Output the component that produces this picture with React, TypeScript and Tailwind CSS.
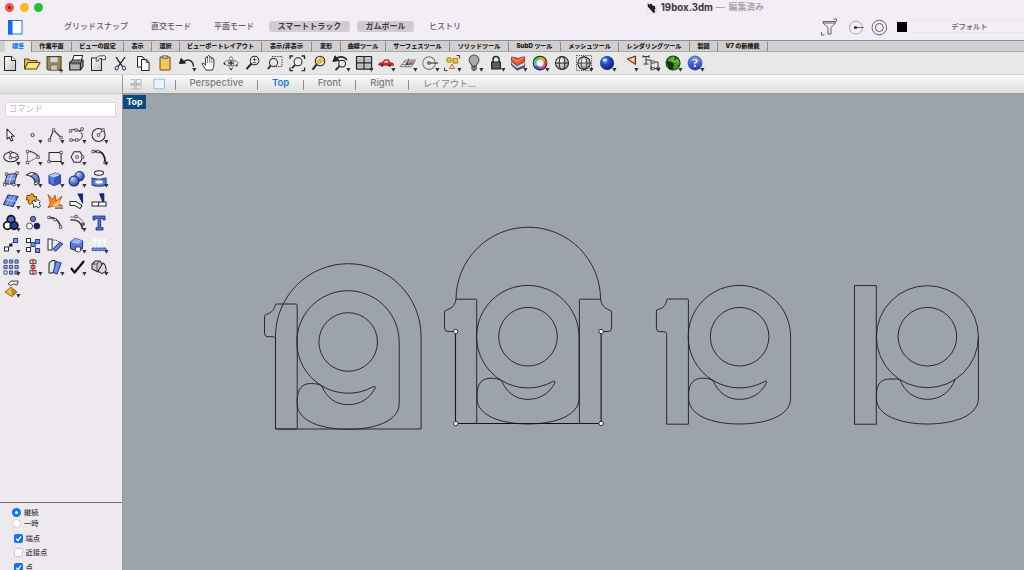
import React from "react";

type Kids = { children?: React.ReactNode };

const INK = "#262626";
const BLUE = "#4a6fd8";

const Drop = () => <path d="M16.200 16h4.200l-2.100 3.600z" fill="#333" stroke="none" />;

const Node = ({ x, y, f = "#fff" }: { x: number; y: number; f?: string }) => (
  <rect x={x - 1.2} y={y - 1.2} width={2.4} height={2.4} fill={f} stroke="#333" strokeWidth={0.75} />
);

const Cell = ({ children, drop = true }: Kids & { drop?: boolean }) => (
  <svg
    viewBox="0 0 22 22"
    className="block h-[22.1px] w-[22.1px] shrink-0 overflow-visible"
    fill="none"
    stroke={INK}
    strokeWidth={1}
    strokeLinejoin="round"
  >
    {children}
    {drop && <Drop />}
  </svg>
);

const Gradients = () => (
  <svg className="absolute h-0 w-0">
    <defs>
      <linearGradient id="paper" x1="0" y1="0" x2="1" y2="1">
        <stop offset="0" stopColor="#fff" />
        <stop offset="1" stopColor="#bdbdbd" />
      </linearGradient>
      <radialGradient id="ballBlue" cx=".35" cy=".3" r=".8">
        <stop offset="0" stopColor="#9fc2ff" />
        <stop offset=".35" stopColor="#2450d8" />
        <stop offset="1" stopColor="#06124f" />
      </radialGradient>
      <radialGradient id="ballSoft" cx=".35" cy=".3" r=".8">
        <stop offset="0" stopColor="#c4d4ff" />
        <stop offset=".5" stopColor="#5b7fd8" />
        <stop offset="1" stopColor="#233c92" />
      </radialGradient>
      <radialGradient id="ballGrey" cx=".35" cy=".3" r=".8">
        <stop offset="0" stopColor="#fff" />
        <stop offset="1" stopColor="#8d8d8d" />
      </radialGradient>
      <radialGradient id="ballGreen" cx=".6" cy=".4" r=".7">
        <stop offset="0" stopColor="#8fe04a" />
        <stop offset="1" stopColor="#126b13" />
      </radialGradient>
      <linearGradient id="help" x1="0" y1="0" x2="0" y2="1">
        <stop offset="0" stopColor="#7d9af0" />
        <stop offset="1" stopColor="#1934b4" />
      </linearGradient>
      <linearGradient id="blueFace" x1="0" y1="0" x2="1" y2="1">
        <stop offset="0" stopColor="#a9bffa" />
        <stop offset="1" stopColor="#3c60cf" />
      </linearGradient>
    </defs>
  </svg>
);

const mainTools: React.ReactNode[] = [
  <Cell drop={false}>
    <path d="M5.5 4.5h7l4 4v10h-11z" fill="url(#paper)" />
    <path d="M12.5 4.5v4h4" fill="#fff" />
  </Cell>,
  <Cell drop={false}>
    <path d="M3.500 17V7h4l1.500 1.500h7V11" fill="#e9b93a" stroke="#5b4310" />
    <path d="M3.500 17l3.500-6.500h12L15.500 17z" fill="#ffe27a" stroke="#5b4310" />
  </Cell>,
  <Cell drop={false}>
    <path d="M4 4.500h14v13.500H5.500L4 16.500z" fill="#96904c" stroke="#45431f" />
    <rect x="7" y="5" width="8" height="5.500" fill="#d7d7d7" stroke="#666" strokeWidth=".5" />
    <rect x="7.500" y="13" width="7" height="5" fill="#c7c7c7" stroke="#444" strokeWidth=".5" />
    <path d="M16 18.500h4M18 16.500v4" />
  </Cell>,
  <Cell drop={false}>
    <path d="M7 9l2-5.500h8.500L16 9" fill="#fff" />
    <path d="M4.500 10.500l3-2.500h10.500v6.500l-2.500 3.500H4.500z" fill="#8f8f8f" />
    <path d="M4.500 11h11v7M15.500 11l2.500-3" stroke="#222" />
    <path d="M6 14h8M6 16h8" stroke="#eee" strokeWidth=".8" />
  </Cell>,
  <Cell drop={false}>
    <path d="M4.500 6h10v12.500h-10z" fill="url(#paper)" />
    <path d="M9 9c0-4 3-6 6-5l2-.5 1.500 1v3h-3l-1-1c-2 0-3 .5-3.500 2.500z" fill="#eee" strokeWidth=".8" />
  </Cell>,
  <Cell drop={false}>
    <path d="M7 5l6.500 9.500M16 5L9 14.500" stroke="#1f2937" strokeWidth="1.300" />
    <ellipse cx="7.800" cy="16" rx="1.500" ry="2" stroke="#2e3e66" transform="rotate(30 7.800 16)" />
    <ellipse cx="14.800" cy="16" rx="1.500" ry="2" stroke="#2e3e66" transform="rotate(-30 14.800 16)" />
  </Cell>,
  <Cell drop={false}>
    <path d="M5.500 4.500h4.500l2.500 2.500v8h-7z" fill="#fff" />
    <path d="M9.500 7.500h4.500l3 3v8H9.500z" fill="#fff" />
    <path d="M14 7.500v3h3" strokeWidth=".7" />
  </Cell>,
  <Cell drop={false}>
    <rect x="6" y="5" width="10" height="13" rx=".8" fill="#f4cb5a" stroke="#6a4c0d" />
    <rect x="8.500" y="3.800" width="5" height="2.500" fill="#c9c9c9" stroke="#444" strokeWidth=".7" />
  </Cell>,
  <Cell>
    <path d="M7 10.500c4-4.500 10-2.500 10.500 4" strokeWidth="1.500" />
    <path d="M3.500 11.500l1.500-5 4.500 4.500z" fill="#222" />
  </Cell>,
  <Cell drop={false}>
    <path d="M8 18c-.5-2-3.500-4-4-6.500 1-1 2.500.5 3.500 1.500V6c.5-1.300 1.700-1.200 2 0V4.500c.5-1.300 1.900-1.200 2.200 0v1c.5-1 1.800-.9 2.100.2V7c.5-.9 1.800-.8 2 .3V13c0 2.500-1 3-1.300 5z" fill="#fff" strokeWidth=".9" />
    <path d="M9.500 6v5M11.700 5v6M13.800 7v4" strokeWidth=".6" />
  </Cell>,
  <Cell drop={false}>
    <ellipse cx="11" cy="11" rx="7" ry="2.800" stroke="#777" strokeWidth=".9" />
    <ellipse cx="11" cy="11" rx="2.300" ry="6.500" stroke="#777" strokeWidth=".9" />
    <path d="M11 8.500v5M8.500 11h5" stroke="#111" strokeWidth="1.100" />
    <path d="M3 12l2-2 .5 3zM9.500 16.500l1.500 2 1.500-2zM15.500 13.500l2.500-1-1 2.500z" fill="#333" stroke="none" />
  </Cell>,
  <Cell drop={false}>
    <circle cx="12.500" cy="8.500" r="4.300" fill="#eee" />
    <path d="M9.500 11.500L4.500 17" strokeWidth="2" />
    <path d="M10.700 7.500h3.600M12.500 5.800v3.500M10.700 10.600h3.600" strokeWidth=".8" />
  </Cell>,
  <Cell drop={false}>
    <rect x="8" y="4.500" width="10" height="10" strokeDasharray="1.500 1" strokeWidth=".8" />
    <circle cx="9.500" cy="10.500" r="4" fill="#eee" />
    <path d="M6.500 13.500L4 17" strokeWidth="1.800" />
  </Cell>,
  <Cell drop={false}>
    <path d="M4 7V4h3M15.500 4h3v3M4 15.500v3h3M15.500 18.500h3v-3" strokeWidth="1.300" />
    <circle cx="12" cy="9.800" r="4" fill="#eee" />
    <path d="M9 12.800L6 16" strokeWidth="1.800" />
  </Cell>,
  <Cell drop={false}>
    <circle cx="12" cy="9" r="4.800" fill="#eee" />
    <path d="M8.500 12.500L4.500 17.500" strokeWidth="2" />
    <circle cx="10.800" cy="10" r="2" fill="#ffd92e" stroke="#a57b08" strokeWidth=".6" />
    <rect x="11.800" y="5.800" width="3.500" height="3.500" fill="#ffd92e" stroke="#a57b08" strokeWidth=".6" />
  </Cell>,
  <Cell>
    <path d="M6 7c3-3 8-3 11 1" strokeWidth="1.600" />
    <path d="M3 9.500l2-5.500 4 4.500z" fill="#222" />
    <circle cx="12" cy="11.500" r="3.400" fill="#eee" />
    <path d="M9.500 14L5.500 18" strokeWidth="1.800" />
  </Cell>,
  <Cell>
    <rect x="3.500" y="4.500" width="15" height="12.500" fill="#c3c5ca" strokeWidth="1.200" />
    <path d="M11 4.500V17M3.500 10.800h15" strokeWidth="1.200" />
    <path d="M5 8.500h4M12.500 8h4M5 14h4M12.500 14h4" stroke="#9da0a6" strokeWidth=".8" />
  </Cell>,
  <Cell>
    <path d="M3.500 13l1-2 3-.5 2-2.700h4l1.500 2.700 3 .8.500 2.200z" fill="#e32218" stroke="#a4130d" strokeWidth=".7" />
    <path d="M8.800 10.500l1.300-1.800h2.500l1 1.800z" fill="#e8efff" stroke="none" />
    <circle cx="7" cy="13.500" r="1.300" fill="#333" stroke="none" />
    <circle cx="14.500" cy="13.500" r="1.300" fill="#333" stroke="none" />
  </Cell>,
  <Cell>
    <path d="M3 14.500l5.500-6.500h10L14 15zM5 12.500h11M7 10h10.500M8 14.500l4-6.500M11 14.700L15.500 8" stroke="#555" strokeWidth=".7" />
    <path d="M10 12l7-1" stroke="#d33" />
    <path d="M10 12l2-5.500" stroke="#2b9b35" />
    <circle cx="10" cy="12" r="1.200" fill="#444" stroke="none" />
  </Cell>,
  <Cell>
    <circle cx="10" cy="11" r="6.300" stroke="#777" />
    <circle cx="10" cy="11" r="1.300" fill="#fff" />
    <path d="M11.300 11H19" />
  </Cell>,
  <Cell>
    <path d="M15.500 3.500h3v3M3.500 15.500v3h3" strokeWidth=".9" />
    <circle cx="8" cy="8" r="2.400" fill="#ffc42d" stroke="#9c6200" strokeWidth=".8" />
    <rect x="12" y="6.500" width="4.500" height="4.500" fill="#ffc42d" stroke="#9c6200" strokeWidth=".8" />
    <path d="M8.500 16.500l2.500-4.500 2.500 4.500z" fill="#ffe59b" stroke="#9c6200" strokeWidth=".8" />
  </Cell>,
  <Cell>
    <path d="M8.800 14c0-2.500-2.800-3-2.800-6a5 5 0 0 1 10 0c0 3-2.800 3.500-2.800 6z" fill="#a9a9a9" stroke="#4b4b4b" />
    <path d="M8.800 14.500h4.400v2.500l-1.200 1.500h-2l-1.200-1.500z" fill="#777" stroke="#444" strokeWidth=".8" />
  </Cell>,
  <Cell>
    <path d="M8 10V7.500a3 3 0 0 1 6 0V10" strokeWidth="1.500" />
    <rect x="6.500" y="10" width="9" height="7" fill="#4d4d4d" />
    <path d="M8 12h6M8 14.500h6" stroke="#888" strokeWidth=".7" />
  </Cell>,
  <Cell>
    <path d="M4.500 13l5.500 5 7.500-3v-3l-7.500 3.500-5.500-5z" fill="#3762cc" stroke="#142a70" strokeWidth=".8" />
    <path d="M4.500 10l5.500 4.500 7.500-4v2.500l-7.500 3.300-5.500-4.500z" fill="#fff" stroke="#555" strokeWidth=".5" />
    <path d="M4.500 5l7 1.500L17.500 4.500v5L10 13.500 4.500 9z" fill="#ef5634" stroke="#7d2412" strokeWidth=".8" />
    <path d="M4.500 5.500l5.500 4 7.500-5" stroke="#ffb08c" strokeWidth=".8" />
  </Cell>,
  <Cell>
    <g stroke="none">
      <path d="M11 11V3.800a7.200 7.200 0 0 1 6.200 3.600z" fill="#f7a42c" />
      <path d="M11 11l6.200-3.600v7.200z" fill="#ff3b34" />
      <path d="M11 11l6.200 3.600a7.200 7.200 0 0 1-6.200 3.600z" fill="#e333d3" />
      <path d="M11 11v7.200a7.200 7.200 0 0 1-6.200-3.600z" fill="#4a59f4" />
      <path d="M11 11l-6.200 3.600V7.400z" fill="#26c8dd" />
      <path d="M11 11L4.800 7.400A7.200 7.200 0 0 1 11 3.800z" fill="#50cf3b" />
    </g>
    <circle cx="11" cy="11" r="6.800" />
    <circle cx="11" cy="11" r="3.800" fill="#f3f3f3" stroke="#999" strokeWidth=".6" />
  </Cell>,
  <Cell drop={false}>
    <circle cx="11" cy="11" r="6.500" fill="url(#ballGrey)" />
    <ellipse cx="11" cy="11" rx="2.800" ry="6.500" />
    <path d="M4.500 11h13" />
  </Cell>,
  <Cell>
    <rect x="3.500" y="3.500" width="15" height="15" strokeDasharray="1 1.200" strokeWidth=".9" />
    <circle cx="11" cy="11" r="6.300" fill="url(#ballGrey)" />
    <ellipse cx="11" cy="11" rx="2.800" ry="6.300" strokeWidth=".8" />
    <path d="M4.700 11h12.600" strokeWidth=".8" />
  </Cell>,
  <Cell>
    <circle cx="11" cy="11" r="6.700" fill="url(#ballBlue)" stroke="#0a1a60" strokeWidth=".5" />
    <ellipse cx="8.800" cy="8" rx="1.800" ry="1.300" fill="#e7f0ff" stroke="none" />
  </Cell>,
  <Cell>
    <path d="M9 7l8.500-3v8.500z" fill="#ff9d2e" strokeWidth=".9" />
    <path d="M12 7.300l4-1.500v4z" fill="#ffdfad" stroke="none" />
  </Cell>,
  <Cell>
    <path d="M3 4.500h6M6 4.500v7.500M3.500 12h5M6 8h5v8.500h7M13 10h5v7" strokeWidth=".9" />
    <path d="M3 3v3M9 3v3M11 14.500v4" strokeWidth=".8" />
    <Node x={13} y={10} />
    <Node x={13} y={16.5} />
    <Node x={18} y={16.5} />
  </Cell>,
  <Cell>
    <circle cx="11" cy="11" r="7" fill="url(#ballGreen)" stroke="#0f3d0f" />
    <path d="M4.500 10c2-1 3 1 5 0l2 3-1.500 4-3-.5M12 8l2-3" fill="#152c0c" stroke="#12300f" strokeWidth="1.100" />
    <path d="M10 11l6-5M11 13l6 .5M10.500 12l5-1.500" stroke="#12400f" strokeWidth=".7" />
  </Cell>,
  <Cell>
    <circle cx="11" cy="11" r="7" fill="url(#help)" stroke="#1b2e8c" strokeWidth=".6" />
    <text x="11" y="15.300" textAnchor="middle" fontSize="12.500" fontWeight="700" fontFamily="Liberation Serif, serif" fill="#fff" stroke="none">?</text>
  </Cell>,
];

const gridStops = [5.5, 11, 16.5];

const sideTools: React.ReactNode[] = [
  <Cell drop={false}><path d="M7 5v10l2.300-2 1.700 4 1.800-.8-1.700-3.900h3z" fill="#fff" /></Cell>,
  <Cell><circle cx="10.500" cy="11" r="1.600" fill="#fff" strokeWidth=".9" /></Cell>,
  <Cell><path d="M5.500 16l4-10 8 8" /><Node x={5.5} y={16} /><Node x={9.5} y={6} /><Node x={17} y={13.5} /></Cell>,
  <Cell><path d="M10 6c-3-1.500-5 0-5.500 1M10 6c3 1.500 5 1 6-.5M12.500 6.500c5 2 5 8 .5 9.500H5" strokeWidth=".9" /><Node x={4.5} y={7} /><Node x={10} y={6} /><Node x={16} y={5} /><Node x={5} y={16} /><Node x={10.5} y={16} /></Cell>,
  <Cell><circle cx="10.500" cy="11" r="6.500" /><path d="M10.500 11l4-4.500" strokeWidth=".8" /><Node x={10.5} y={11} /><Node x={15} y={6} /></Cell>,

  <Cell><ellipse cx="11" cy="11" rx="7.300" ry="4.800" /><path d="M10.500 11.500V6M10.500 11.500h6" strokeWidth=".7" /><Node x={10.5} y={6.5} /><Node x={10.5} y={11.5} /><Node x={17} y={11.5} /></Cell>,
  <Cell><path d="M5.500 5.500c5 0 9 2 10.500 5.500" /><path d="M5.500 5.500v11l10.500-5.500" strokeWidth=".8" strokeDasharray="1.500 .7" /><Node x={5.5} y={5.5} /><Node x={5.5} y={16.5} /><Node x={16} y={11} /></Cell>,
  <Cell><rect x="5" y="6.500" width="12" height="9" /><Node x={5} y={15.5} /><Node x={17} y={6.5} /></Cell>,
  <Cell><path d="M5 11l3-5.200h6L17 11l-3 5.200H8z" /><Node x={11} y={11} /><Node x={16.5} y={11} /></Cell>,
  <Cell><path d="M5 5.500h4c5 0 8 4 8 10v2" strokeWidth="2" /><Node x={5} y={5.5} /><Node x={10} y={5.5} /><Node x={17} y={16.5} /></Cell>,

  <Cell><path d="M7 6.500l10-1-3 10.500H4.500z" fill="url(#blueFace)" /><path d="M12 6l-3 10M5.500 11h10" stroke="#dfe8ff" strokeWidth=".7" /><Node x={6.5} y={6} /><Node x={17} y={5} /><Node x={4.5} y={16.5} /><Node x={14} y={16.5} /></Cell>,
  <Cell><path d="M4.500 7l4.500-2.500c6 0 9 4 8 10.500l-4 2c1-5.500-3-9.500-8.500-10z" fill="url(#blueFace)" /><path d="M4.500 7l4.500-2.500 4 1L9 8z" fill="#fff" strokeWidth=".7" /><path d="M12 15l4-1.500.5 1.500-3.500 2z" fill="#fff" strokeWidth=".7" /></Cell>,
  <Cell><path d="M5 7.500L11.500 5l5 2v8L10 17.500l-5-2.500z" fill="#5a7ade" stroke="#1f347f" /><path d="M5 7.500L11.500 5l5 2L10 9.500z" fill="#b9caff" stroke="none" /><path d="M10 9.500v8l6.500-2.500V7z" fill="#3857bd" stroke="none" /></Cell>,
  <Cell><circle cx="13.500" cy="8" r="4.600" fill="url(#ballSoft)" stroke="#142764" /><circle cx="8" cy="13" r="5" fill="url(#ballSoft)" stroke="#142764" /></Cell>,
  <Cell><ellipse cx="11" cy="5" rx="4.500" ry="2.200" fill="#fff" /><path d="M4 10c3 1.500 11 1.500 14 0v7c-3 1.500-11 1.500-14 0z" fill="#5678e2" stroke="#23408f" /><ellipse cx="11" cy="14" rx="4" ry="2" fill="#fff" stroke="#8aa0e8" /></Cell>,

  <Cell><path d="M8 5l10 1.500-5 10-9.500-2z" fill="#6484df" stroke="#1f347f" /><path d="M11.500 5.500l-5 9.500M14.500 6l-5 10M6 9.500l10.500 2" stroke="#d5deff" strokeWidth=".7" /></Cell>,
  <Cell drop={false}><path d="M5 5.500h3l1.500-2 2 1v2h3v3l-2 1 .5 3-3-1-2 2-2-2 1-2.500H4.500z" fill="#f0a127" stroke="#5c3607" strokeWidth=".9" /><path d="M11 10.500l3 1 2-2 2 2-1 2 1.500 2.500-2.500 2-1.500-2-3 1.500v-3l-1.500-2z" fill="#fff" strokeWidth=".9" /></Cell>,
  <Cell drop={false}><path d="M4 4.500l4.500 5L11 5l1 6 6-5-3.500 7.500 4 2.500H9l-5 1.500L6.500 13z" fill="#f18a27" stroke="#c23c08" strokeWidth=".8" /><path d="M8 16l8-7-2 7z" fill="#ffcb4e" stroke="none" /><path d="M11 18h8" /></Cell>,
  <Cell drop={false}><path d="M12 4h4.500v9z" fill="#152b79" stroke="#152b79" /><path d="M4 11.500h6l6 4-2 3-5-3H4z" fill="#fff" /></Cell>,
  <Cell drop={false}><path d="M12 4h3.500v9z" fill="#152b79" stroke="#152b79" strokeWidth="1.500" /><path d="M4 12h7l-1 4H4zM11 12h7v4h-8z" fill="#fff" /></Cell>,

  <Cell><circle cx="11" cy="7.500" r="3.800" fill={BLUE} stroke="#111" strokeWidth="1.700" /><circle cx="7.500" cy="13.500" r="3.800" fill="#fff" stroke="#111" strokeWidth="1.700" /><circle cx="14" cy="13.500" r="3.800" fill="#243a98" stroke="#111" strokeWidth="1.700" /></Cell>,
  <Cell drop={false}><circle cx="11" cy="7" r="2.700" fill="#5679e3" strokeWidth=".8" /><circle cx="7.500" cy="14" r="3" fill="#fff" strokeWidth=".8" /><circle cx="14.800" cy="14" r="3" fill="#142163" strokeWidth=".8" /></Cell>,
  <Cell drop={false}><path d="M5.500 5.500c6 0 11 4 11 11" strokeWidth="1.400" /><Node x={5} y={5.5} /><Node x={11} y={7.5} /><Node x={16.5} y={15} /></Cell>,
  <Cell><path d="M4.500 8c7-1 11 3 12 9" strokeWidth="1.400" /><path d="M4 5h8l5 4M16 12v5" strokeWidth=".6" /><Node x={10} y={4.5} /><Node x={17} y={12} f="#888" /></Cell>,
  <Cell drop={false}><path d="M5 4h12v4h-2V6.500h-2.300v9H15V18H8v-2.500h2v-9H7V8H5z" fill="#4d70d5" stroke="#1b3279" strokeWidth=".8" /></Cell>,

  <Cell><path d="M7 14l7-6" strokeDasharray="1.500 1" /><rect x="4.500" y="13" width="4" height="4" fill="#fff" /><rect x="13.500" y="4.500" width="4" height="4" fill="#7a99f1" stroke="#23408f" /><Node x={10.8} y={11} f="#222" /></Cell>,
  <Cell drop={false}><path d="M7 7l8 8M7 15l8-8" strokeWidth=".6" /><rect x="4.500" y="4.500" width="4" height="4" fill="#fff" /><rect x="13.500" y="5.500" width="4" height="4" fill="#6f91f0" stroke="#23408f" /><rect x="9" y="8.500" width="4" height="4" fill="#6f91f0" stroke="#23408f" /><rect x="4.500" y="13.500" width="4" height="4" fill="#fff" /><rect x="13.500" y="14.500" width="4" height="4" fill="#6f91f0" stroke="#23408f" /></Cell>,
  <Cell drop={false}><path d="M4 5h4v11H4z" fill="#fff" /><path d="M9 6c4 0 5 1 7 3" strokeDasharray="1.500 1" strokeWidth=".8" /><path d="M9 15l7-7 2.500 2-7 7z" fill="#7190e8" stroke="#23408f" /></Cell>,
  <Cell><path d="M4.500 8l5-3.500 7 2.500v7.500l-4.500 3-7.500-3z" fill="#5b7be0" stroke="#1f347f" /><path d="M4.500 8l5-3.500 7 2.500-4.500 3z" fill="#a3b8fa" stroke="none" /><path d="M9.500 13h5v4l-2 1-3-1z" fill="#fff" strokeWidth=".8" /></Cell>,
  <Cell><path d="M6.500 12V5m-1.800 2l1.800-2 1.800 2M11.500 12V5m-1.800 2l1.800-2 1.800 2M16.500 12V5m-1.800 2l1.800-2 1.800 2" stroke="#fff" strokeWidth="1.100" /><path d="M4 14h14v2.500H4z" fill="#7190e8" stroke="#23408f" strokeWidth=".8" strokeDasharray="3 .6" /></Cell>,

  <Cell>
    {gridStops.map((x) =>
      gridStops.map((y) => (
        <rect key={x * 100 + y} x={x - 1.6} y={y - 1.6} width={3.2} height={3.2} fill={x === 5.5 && y === 16.5 ? "#fff" : "#91a8ee"} stroke="#2c437f" strokeWidth=".9" />
      )),
    )}
  </Cell>,
  <Cell><rect x="8" y="4" width="6" height="3.500" fill="#ddd" strokeWidth=".8" /><rect x="9" y="9.500" width="4" height="3" fill="#ddd" strokeWidth=".8" /><rect x="8" y="14.500" width="6" height="3.500" fill="#ddd" strokeWidth=".8" /><path d="M11 3v16" stroke="#e0221b" strokeWidth="1.200" /></Cell>,
  <Cell><path d="M5 7l3-2.500h3v11L8 17H5z" fill="#e6e6e6" /><path d="M12 5.500l5 1.500-4 11-4-1.500z" fill="#7190e8" stroke="#23408f" /></Cell>,
  <Cell><path d="M5 12l3.500 4.500L18 5" stroke="#111" strokeWidth="2.200" /></Cell>,
  <Cell><path d="M4 8l3-3h5l2 3v6l-4 2-6-3z" fill="#c7c7c7" /><path d="M10 15l5-8c2 1 3 5 3 8l-4 2.500z" fill="#ddd" /><path d="M4 8h5l3-3M9 8v7" strokeWidth=".7" /></Cell>,

  <Cell><path d="M5 14l6-5 6 5-5 4.500z" fill="#efbd48" stroke="#66450d" strokeWidth=".8" /><path d="M11 9l1 9.500L17 14z" fill="#b98524" stroke="none" /><path d="M8 6l3-3h7l-1 4-4-1-2 1.500z" fill="#e9e9e9" strokeWidth=".8" /></Cell>,
];

const tabs: [string, string][] = [
  ["標準", "w-[27px]"],
  ["作業平面", "w-[40px]"],
  ["ビューの設定", "w-[52px]"],
  ["表示", "w-[28px]"],
  ["選択", "w-[28px]"],
  ["ビューポートレイアウト", "w-[82px]"],
  ["表示/非表示", "w-[50px]"],
  ["変形", "w-[29px]"],
  ["曲線ツール", "w-[45px]"],
  ["サーフェスツール", "w-[64px]"],
  ["ソリッドツール", "w-[59px]"],
  ["SubD ツール", "w-[52px]"],
  ["メッシュツール", "w-[58px]"],
  ["レンダリングツール", "w-[71px]"],
  ["製図", "w-[28px]"],
  ["V7 の新機能", "w-[50px]"],
];

const TitleBar = () => (
  <div className="flex h-[15px] items-center">
    <div className="flex gap-[5.6px] pl-[5px]">
      <span className="flex h-[9px] w-[9px] items-center justify-center rounded-full bg-[#f9514b]">
        <span className="h-[3px] w-[3px] rounded-full bg-[#7d0d0a]" />
      </span>
      <span className="h-[9px] w-[9px] rounded-full bg-[#fcb429]" />
      <span className="h-[9px] w-[9px] rounded-full bg-[#24c138]" />
    </div>
    <div className="ml-[604px] flex items-center">
      <svg viewBox="0 0 10 12" className="h-[12px] w-[10px]">
        <path d="M1 0h6l2.500 2.500V11H1z" fill="#fff" stroke="#bbb" strokeWidth=".4" />
        <path d="M.5 1.500l2 1 2-1 1 2 2.500.5.500 3-1 1 1 2-2 1-2-2-1.500-2L1 5z" fill="#222" />
      </svg>
      <span className="ml-[3.5px] w-[52px] whitespace-nowrap text-[9.7px] font-bold text-[#3a373b]">19box.3dm</span>
      <span className="ml-[3px] whitespace-nowrap text-[8.8px] font-bold text-[#aaa5ac]">
        — <span className="ml-[2px]">編集済み</span>
      </span>
    </div>
  </div>
);

const ModeBar = () => (
  <div className="flex h-[25px] items-center whitespace-nowrap text-[8px] font-medium text-[#605c62]">
    <svg viewBox="0 0 15 15" className="ml-[8px] h-[15px] w-[15px] shrink-0">
      <rect x=".5" y=".5" width="13.500" height="13.500" fill="#fff" stroke="#1a78f7" />
      <rect width="4.500" height="14.500" fill="#0f6df5" />
    </svg>
    <div className="flex shrink-0 items-center pb-[3px]">
      <span className="ml-[40px] w-[66px] text-center">グリッドスナップ</span>
      <span className="ml-[19px] w-[46px] text-center">直交モード</span>
      <span className="ml-[17px] w-[46px] text-center">平面モード</span>
      <span className="ml-[12px] flex h-[11px] w-[81px] items-center justify-center rounded-[3px] bg-[#d2cbd4] font-bold text-[#3d393f]">スマートトラック</span>
      <span className="ml-[7px] flex h-[11px] w-[57px] items-center justify-center rounded-[3px] bg-[#d2cbd4] font-bold text-[#3d393f]">ガムボール</span>
      <span className="ml-[12px] w-[38px] text-center">ヒストリ</span>
    </div>
    <svg viewBox="820 17 72 20" className="ml-[356px] h-[20px] w-[72px] shrink-0" fill="none" stroke="#55515a" strokeWidth=".9">
      <path d="M823 20.500h12.500v1.500l-4.500 4.500v6.500h-3v-6.500l-5-4.500zM823 22h12M833.500 18h3v2.500M821.500 31v3h3" />
      <circle cx="856" cy="26.500" r="6.500" stroke="#a39ea6" />
      <path d="M856 26.500h7.500" />
      <circle cx="855.500" cy="26.500" r="1.600" fill="#333" stroke="none" />
      <circle cx="879.300" cy="26.500" r="7.300" />
      <circle cx="879.300" cy="26.500" r="4" />
    </svg>
    <span className="mb-px ml-[4.7px] h-[10.5px] w-[10.5px] shrink-0 bg-black" />
    <div className="mb-[2px] ml-[3px] flex h-[13px] min-w-0 flex-1 items-center border-y border-[#ebe4ed] pl-[41px] text-[7.3px]">デフォルト</div>
  </div>
);

const TabRow = () => (
  <div className="flex h-[12px] border-t border-[#8f8d90] bg-[#cfcfcf] pl-[5px]">
    {tabs.map(([label, width], i) => (
      <span
        key={label}
        className={
          width +
          " flex shrink-0 items-center justify-center whitespace-nowrap rounded-tr-[2px] border-r border-r-[#8c8c8c] text-[6.1px] font-black " +
          (i === 0 ? "bg-[#e9e9e9] text-[#1680ff]" : "border-b border-b-[#aaa] text-[#222]")
        }
      >
        {label}
      </span>
    ))}
    <span className="flex-1 border-b border-[#aaa]" />
  </div>
);

const Bar = () => <span className="mt-px h-[10px] w-px shrink-0 bg-[#8d8d8d]" />;

const ViewTabs = () => (
  <div className="flex h-[20px] shrink-0 items-center whitespace-nowrap border-b-2 border-[#9c9c9a] bg-gradient-to-b from-[#fafafa] to-[#dedede] text-[9.5px] font-medium text-[#7c7c7c]">
    <svg viewBox="0 0 36 12" className="ml-[7px] h-[12px] w-[36px] shrink-0" fill="none">
      <path d="M.5 1.500h4.500v4H.5M6.500 1.500h4.500v4H6.500M.5 7h4.500v4H.5M6.500 7h4.500v4H6.500M0 5.500h11.500M0 7h11.500M5 1v10.500M6.500 1v10.500" stroke="#b2b2b2" strokeWidth=".8" />
      <rect x="24" y="1.200" width="10.500" height="9.600" fill="#edf3ff" stroke="#6ba5f7" strokeWidth=".9" strokeDasharray="2 .5" />
    </svg>
    <span className="ml-[9px] flex items-center"><Bar /></span>
    <span className="w-[81px] pb-[2px] text-center">Perspective</span>
    <Bar />
    <span className="w-[45px] pb-[2px] text-center font-semibold text-[#1a78f7]">Top</span>
    <Bar />
    <span className="w-[51px] pb-[2px] text-center">Front</span>
    <Bar />
    <span className="w-[52px] pb-[2px] text-center">Right</span>
    <Bar />
    <span className="w-[81px] pb-[2px] text-center text-[9px] font-normal">レイアウト...</span>
  </div>
);

const NINE_OUTER =
  "M-26.500 43.800A51.200 51.200 0 1 1 51 0V61.500C51 79 27 87.300 0 87.300S-51 79-51 61.500V59C-51 46-45.500 41.500-37 41.500C-32.500 41.500-29.500 42.300-26.500 43.800C-22 55-13 62.700 0 62.700C12 62.700 21.500 56.500 26.700 46.500C27.500 44.500 26.500 43.700 24.500 45A51.200 51.200 0 0 1-26.500 43.800";
const NINE_TAIL =
  "M51 0V61.500C51 79 27 87.300 0 87.300S-51 79-51 61.500V59C-51 46-45.500 42.300-37 42.300H-30L-27.500 43C-23 54.500-13 62.700 0 62.700S23.500 54.500 27.700 42.800";

const Nine = ({ x, y, sharp = false }: { x: number; y: number; sharp?: boolean }) => (
  <g transform={"translate(" + x + " " + y + ")"}>
    <circle r="29.300" />
    {sharp && <circle r="51" />}
    <path d={sharp ? NINE_TAIL : NINE_OUTER} />
  </g>
);

const Drawing = () => (
  <svg viewBox="123 95 901 475" className="block h-[475px] w-[901px]" fill="none" stroke="#222426" strokeWidth=".95">
    <Nine x={348.2} y={342} />
    <path d="M275.500 429V336.500a72.800 72.800 0 0 1 145.600 0V429z" />
    <path d="M277 304h19q1.200 0 1.200 1.200V427.500q0 1.500-1.500 1.500h-18.500q-1.700 0-1.700-1.500V338.500q-.5-1.800-2.500-1.800h-5q-3.500 0-3.500-3V316.500q0-1.500 2-2.200c5-1.500 7.500-4.500 8.500-8.500q.5-1.800 2-1.800z" />

    <Nine x={528} y={336.7} />
    <path d="M456 299.500a72.300 72.300 0 0 1 144.600 0" />
    <path d="M456 299.200h19.500q1.200 0 1.200 1.200V422q0 1.700-1.500 1.700M456 299.200q-1 8-8.500 10.500-3 .7-3 2.300V328q0 3.500 3.500 3.500h7.500" />
    <path d="M600.600 299.200h-20q-1.200 0-1.200 1.200V422q0 1.700 1.500 1.700M600.600 299.200q1 8 8 10.500 3 .7 3 2.300V328q0 3.500-3.500 3.500H601" />
    <path d="M455.500 331.500v92h145.600v-92" stroke="#141414" strokeWidth="1.100" />
    <g fill="#fff">
      <circle cx="455.700" cy="331.500" r="2.200" />
      <circle cx="601.100" cy="331.500" r="2.200" />
      <circle cx="455.700" cy="423.500" r="2.200" />
      <circle cx="601.100" cy="423.500" r="2.200" />
    </g>

    <Nine x={739.6} y={336.7} />
    <path d="M667.500 299h20q.9 0 .9 1V424.200h-21.700V334.500q0-2.800-2.800-2.800h-4q-3.500 0-3.500-3.500V311q0-1.200 1.800-1.600c5-1 7.700-4.500 8.300-8.400q.2-2 1-2z" />

    <Nine x={927.4} y={336.7} sharp />
    <rect x="854.500" y="285.600" width="21.800" height="138.600" />
  </svg>
);

const Radio = ({ on, label }: { on?: boolean; label: string }) => (
  <div className="flex h-[11px] items-center">
    <span className={"flex h-[9px] w-[9px] items-center justify-center rounded-full " + (on ? "bg-[#0f74fb]" : "border border-[#d0ccd2] bg-white")}>
      {on && <span className="h-[3.5px] w-[3.5px] rounded-full bg-white" />}
    </span>
    <span className="ml-[3px]">{label}</span>
  </div>
);

const Check = ({ on, label }: { on?: boolean; label: string }) => (
  <div className="flex h-[14.6px] items-center pl-[1.5px]">
    <span className={"flex h-[9px] w-[9px] items-center justify-center rounded-[2px] " + (on ? "bg-[#0f74fb]" : "border border-[#cdc9cf] bg-white")}>
      {on && (
        <svg viewBox="0 0 9 9" className="h-[9px] w-[9px]">
          <path d="M2.200 4.800L4 6.700 6.900 2.400" fill="none" stroke="#fff" strokeWidth="1.300" />
        </svg>
      )}
    </span>
    <span className="ml-[3px]">{label}</span>
  </div>
);

const Sidebar = () => (
  <aside className="flex w-[123px] shrink-0 flex-col border-r border-[#98969a] bg-[#eee9ef]">
    <div className="h-[19px] shrink-0 border-b border-[#d2d0d2] bg-gradient-to-b from-[#f8f8f8] to-[#dfdfdf]" />
    <div className="ml-[5px] mt-[8px] flex h-[15px] w-[111px] shrink-0 items-center border border-[#dcd7de] bg-white pl-[2.5px] text-[8.6px] text-[#bdbabf]">コマンド</div>
    <div className="-ml-[0.5px] mt-[6.7px] flex h-[378.3px] w-[111px] shrink-0 flex-wrap content-start">
      {sideTools.map((tool, i) => (
        <React.Fragment key={i}>{tool}</React.Fragment>
      ))}
    </div>
    <div className="flex-1 border-t-[1px] border-[#706e72] pl-[12px] pt-[4px] text-[7.3px] font-medium text-[#3d3a3f]">
      <Radio on label="継続" />
      <Radio label="一時" />
      <div className="mt-[2px]">
        <Check on label="端点" />
        <Check label="近接点" />
        <Check on label="点" />
      </div>
    </div>
  </aside>
);

export default function App() {
  return (
    <div className="relative flex h-[570px] w-[1024px] flex-col overflow-hidden bg-[#f3edf5] font-['Inter','Noto_Sans_CJK_JP',sans-serif] leading-none">
      <Gradients />
      <TitleBar />
      <ModeBar />
      <TabRow />
      <div className="flex h-[23px] shrink-0 border-b border-[#d5d5d5] bg-[#e8e8e8]">
        <div className="-ml-px flex">
          {mainTools.map((tool, i) => (
            <React.Fragment key={i}>{tool}</React.Fragment>
          ))}
        </div>
      </div>
      <div className="flex min-h-0 flex-1">
        <Sidebar />
        <main className="relative flex min-w-0 flex-1 flex-col bg-[#9ca3ab]">
          <ViewTabs />
          <Drawing />
          <span className="absolute left-0 top-[20px] flex h-[14px] w-[23px] items-center justify-center bg-[#064b87] text-[8.8px] font-bold text-white">Top</span>
        </main>
      </div>
    </div>
  );
}
